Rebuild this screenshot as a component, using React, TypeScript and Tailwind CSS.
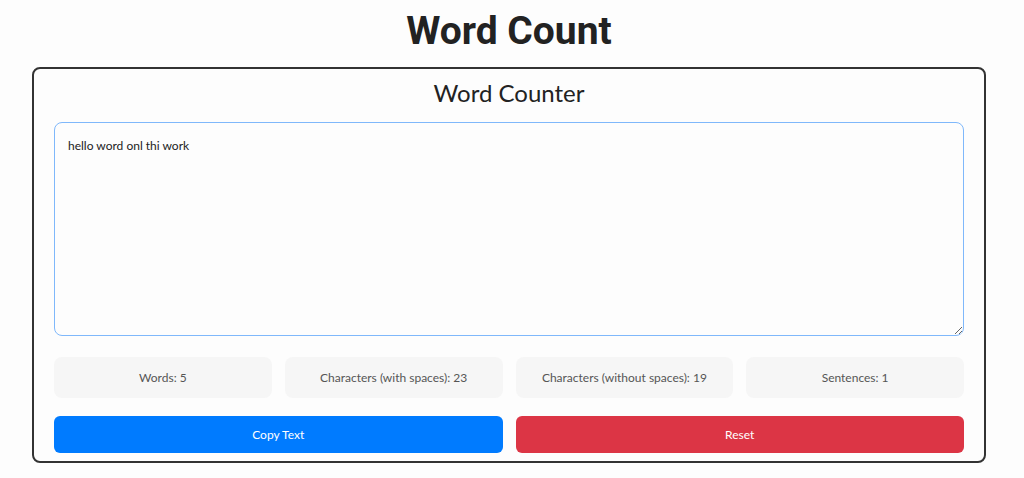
import { useState } from "react";

const sans = "font-['Lato','Noto_Sans',sans-serif]";

export default function App() {
  const [text, setText] = useState("hello word onl thi work");

  const words = text.trim() ? text.trim().split(/\s+/).length : 0;
  const chars = text.length;
  const charsNoSpaces = text.replace(/\s/g, "").length;
  const sentences = text.trim()
    ? Math.max(1, text.split(/[.!?]+/).filter((s) => s.trim()).length)
    : 0;

  const stats = [
    `Words: ${words}`,
    `Characters (with spaces): ${chars}`,
    `Characters (without spaces): ${charsNoSpaces}`,
    `Sentences: ${sentences}`,
  ];

  return (
    <div className="min-h-[478px] bg-[#fdfdfd] pt-[7px]">
      <div className="ml-[32px] w-[954px]">
        <h1 className="text-center font-['Roboto',sans-serif] text-[39px] font-bold leading-[48px] text-[#222]">
          Word Count
        </h1>
        <div className="mt-[12px] rounded-[8px] border-2 border-[#333] bg-[#fdfdfd] px-[20px] pb-[8px] pt-[8px]">
          <h2 className="text-center font-['Lato',sans-serif] text-[24px] leading-[32px] text-[#222]">
            Word Counter
          </h2>
          <textarea
            value={text}
            onChange={(e) => setText(e.target.value)}
            spellCheck
            className={`${sans} mt-[13px] block h-[214px] w-full rounded-[8px] border-[1.5px] border-[#7fb8fb] bg-[#fdfdfd] px-[13px] py-[13px] text-[12px] leading-[20px] text-[#222] outline-none`}
          />
          <div className="mt-[21px] grid grid-cols-4 gap-[13px]">
            {stats.map((s) => (
              <div
                key={s}
                className={`${sans} flex h-[41px] items-center justify-center rounded-[8px] bg-[#f6f6f6] text-[12px] text-[#555]`}
              >
                {s}
              </div>
            ))}
          </div>
          <div className="mt-[18px] grid grid-cols-2 gap-[13px]">
            <button
              onClick={() => navigator.clipboard?.writeText(text)}
              className={`${sans} h-[37px] rounded-[6px] bg-[#007bff] text-[12px] text-white`}
            >
              Copy Text
            </button>
            <button
              onClick={() => setText("")}
              className={`${sans} h-[37px] rounded-[6px] bg-[#dc3545] text-[12px] text-white`}
            >
              Reset
            </button>
          </div>
        </div>
      </div>
    </div>
  );
}
